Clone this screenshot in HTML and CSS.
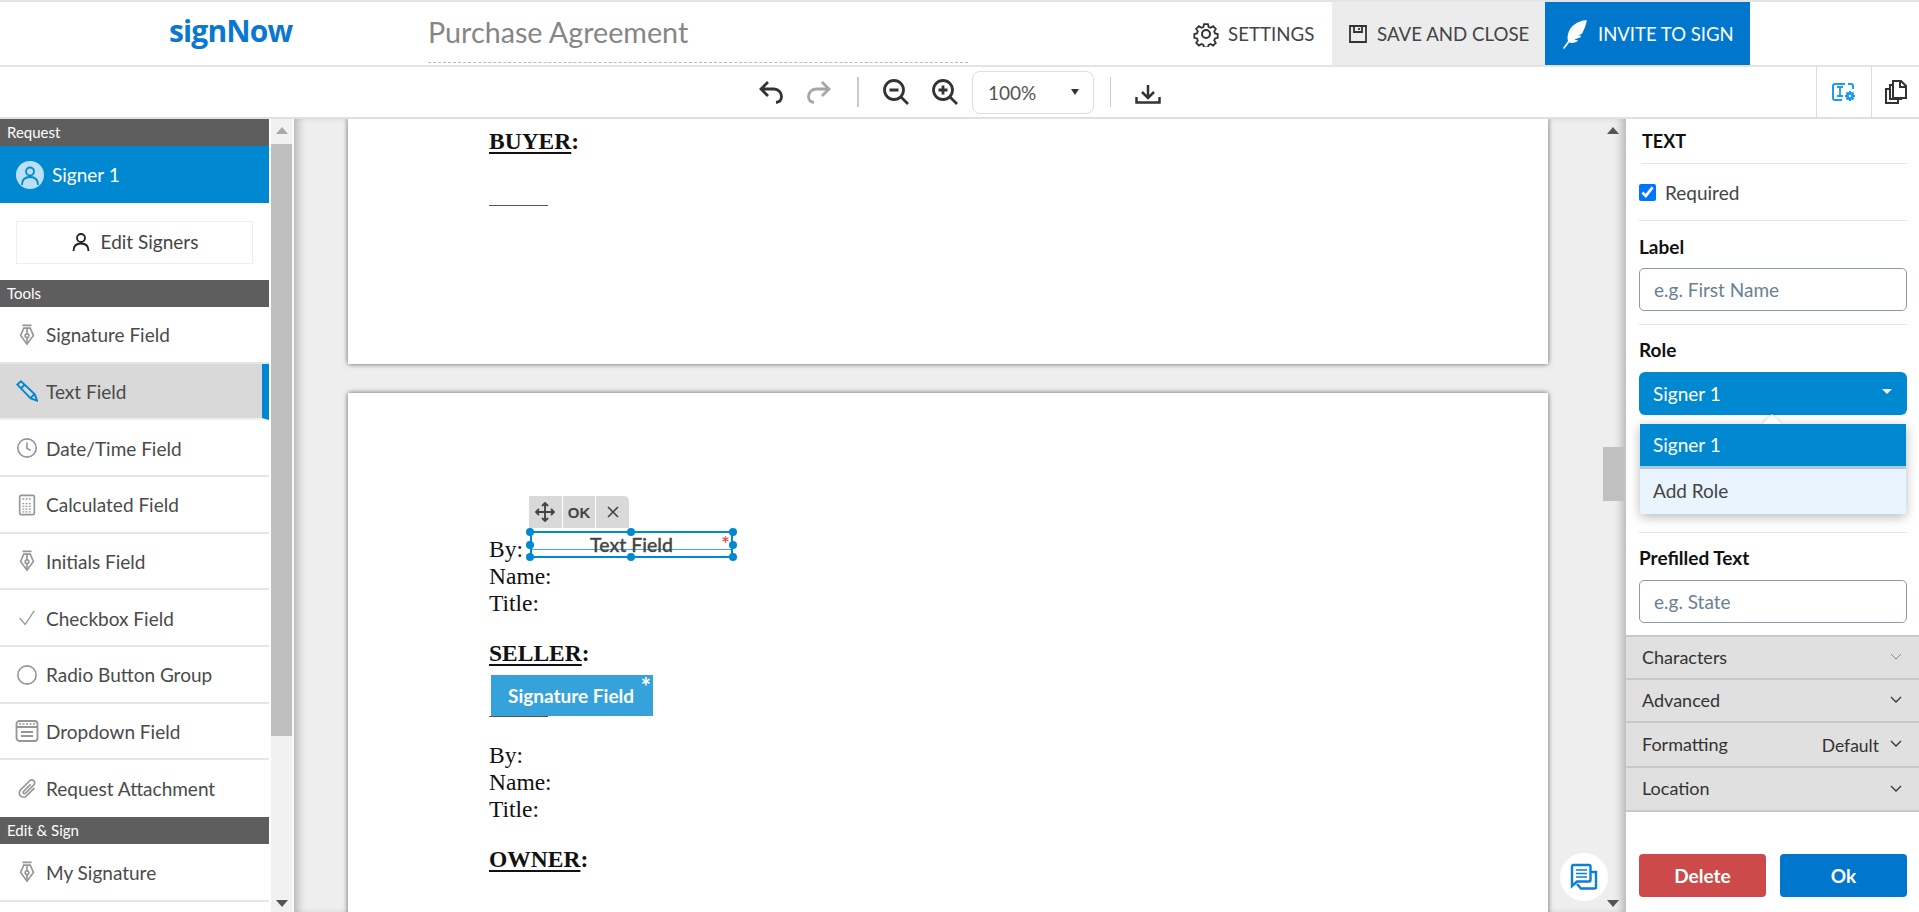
FILE: index.html
```html
<!DOCTYPE html>
<html lang="en">
<head>
<meta charset="utf-8">
<title>signNow - Purchase Agreement</title>
<link rel="stylesheet" href="styles.css">
</head>
<body>
<header class="header">
  <div class="logo">signNow</div>
  <div class="doc-title">Purchase Agreement</div>
  <div class="hbtn settings">
    <svg class="ic-gear" viewBox="0 0 26 26"><path d="M10.8 2h4.4l.7 3.2 2.2.9 2.8-1.8 3 3-1.8 2.8.9 2.2 3 .7v4.2l-3 .7-.9 2.2 1.8 2.8-3 3-2.8-1.8-2.2.9-.7 3h-4.4l-.7-3-2.2-.9-2.8 1.8-3-3 1.8-2.8-.9-2.2-3-.7v-4.2l3-.7.9-2.2-1.8-2.8 3-3 2.8 1.8 2.2-.9z" transform="translate(1.3 1.3) scale(.9)"/><circle cx="13" cy="13" r="4"/></svg>
    <span>SETTINGS</span>
  </div>
  <div class="hbtn save">
    <svg class="ic-save" viewBox="0 0 18 18"><path d="M1 1h16v16H1z"/><path d="M5 1v6h8V1M10 3v2"/></svg>
    <span>SAVE AND CLOSE</span>
  </div>
  <div class="hbtn invite">
    <svg class="ic-feather" viewBox="0 0 26 30"><path d="M25 1C15 2 8 7 6 15c-.6 3-.6 5 0 7l-5 7 1.200 1 5-6.500c3 1 7 0 9-2l-4-1 6-2 1-2-3 0 4-2c2-4 4-9 4.800-14z"/></svg>
    <span>INVITE TO SIGN</span>
  </div>
</header>

<div class="toolbar">
  <svg class="tb-undo" viewBox="0 0 26 24"><path d="M10 2 3 9l7 7M3 9h13a7.500 7.500 0 0 1 7.500 7.500c0 3-2 5.500-5.500 6"/></svg>
  <svg class="tb-redo" viewBox="0 0 26 24"><path d="M16 2l7 7-7 7M23 9H10a7.500 7.500 0 0 0-7.500 7.500c0 3 2 5.500 5.500 6"/></svg>
  <span class="tb-sep"></span>
  <svg class="tb-zoom first" viewBox="0 0 26 26"><circle cx="11" cy="11" r="9.500"/><path d="M18 18l7 7M6.500 11h9"/></svg>
  <svg class="tb-zoom" viewBox="0 0 26 26"><circle cx="11" cy="11" r="9.500"/><path d="M18 18l7 7M6.500 11h9M11 6.500v9"/></svg>
  <div class="zoom-select"><span>100%</span><i class="tri"></i></div>
  <span class="tb-sep second"></span>
  <svg class="tb-down" viewBox="0 0 26 20"><path d="M13 1v12M7 8l6 6 6-6M1.500 13v5.500h23V13"/></svg>
  <div class="tb-right">
    <div class="tb-tab">
      <svg class="ic-fieldset" viewBox="0 0 24 20"><path d="M13 2H3a2 2 0 0 0-2 2v12a2 2 0 0 0 2 2h7"/><path d="M16 2h3a2 2 0 0 1 2 2v3"/><path class="thin" d="M5 5h6M8 5v9M5 14h6"/><circle class="gear-hub" cx="18" cy="14" r="2.600"/><path d="M18 9v2M18 17v2M13 14h2M21 14h2M14.500 10.500l1.200 1.200M20.300 16.300l1.200 1.200M21.500 10.500l-1.200 1.200M15.700 16.300l-1.200 1.200"/></svg>
    </div>
    <div class="tb-tab">
      <svg class="ic-pages" viewBox="0 0 22 24"><path d="M8 1h8l5 5v12H8z"/><path d="M15 1v6h6"/><path d="M8 5H5v14h11v-1"/><path d="M5 9H1v14h12v-4"/></svg>
    </div>
  </div>
</div>

<main class="main">
  <aside class="sidebar">
    <div class="sec">Request</div>
    <div class="signer">
      <svg class="avatar" viewBox="0 0 28 28"><circle class="av-bg" cx="14" cy="14" r="14"/><circle class="av-l" cx="14" cy="10.500" r="4"/><path class="av-l" d="M6 24c0-6 3-8 8-8s8 2 8 8"/></svg>
      <span>Signer 1</span>
    </div>
    <div class="edit-wrap">
      <div class="edit-signers">
        <svg class="ic-person" viewBox="0 0 20 20"><circle cx="10" cy="6" r="4"/><path d="M2.500 19c0-5 3-7.500 7.500-7.500s7.500 2.500 7.500 7.500"/></svg>
        <span>Edit Signers</span>
      </div>
    </div>
    <div class="sec tools">Tools</div>
    <div class="row"><svg class="ri" viewBox="0 0 24 24"><path d="M7 1.500h10M8.500 4.500h7l3.500 8-7 9.500-7-9.500z"/><path d="M12 4.500v6M12 15v7"/><circle cx="12" cy="12.800" r="2"/></svg><span>Signature Field</span></div>
    <div class="row active"><svg class="ri blue" viewBox="0 0 24 24"><path d="M1.500 5l4-3.500 15 14 2.500 7-7-2.500zM5.500 9l4-4M16 19.500l4-4"/></svg><span>Text Field</span></div>
    <div class="row"><svg class="ri" viewBox="0 0 24 24"><circle cx="12" cy="12" r="10"/><path d="M12 6v6.500l4 2"/></svg><span>Date/Time Field</span></div>
    <div class="row"><svg class="ri" viewBox="0 0 24 24"><rect x="4" y="1.500" width="16" height="21" rx="1.500"/><path class="dots" d="M7 5.500h10M7 10.500h10M7 13.500h10M7 16.500h10M7 19.500h10"/></svg><span>Calculated Field</span></div>
    <div class="row"><svg class="ri" viewBox="0 0 24 24"><path d="M7 1.500h10M8.500 4.500h7l3.500 8-7 9.500-7-9.500z"/><path d="M12 4.500v6M12 15v7"/><circle cx="12" cy="12.800" r="2"/></svg><span>Initials Field</span></div>
    <div class="row"><svg class="ri thin-ic" viewBox="0 0 24 24"><path d="M4 12l6 7L20 4"/></svg><span>Checkbox Field</span></div>
    <div class="row"><svg class="ri" viewBox="0 0 24 24"><circle cx="12" cy="12" r="10"/></svg><span>Radio Button Group</span></div>
    <div class="row"><svg class="ri wide" viewBox="0 0 24 24"><rect x="1.500" y="2" width="21" height="20" rx="3"/><path d="M2 8h20M6 13h12M6 17h12"/><path class="dots" d="M4 5h16"/></svg><span>Dropdown Field</span></div>
    <div class="row last"><svg class="ri" viewBox="0 0 24 24"><path d="M20 11l-8.500 8.500a4.500 4.500 0 0 1-6.500-6.500L15 3a3 3 0 0 1 4.500 4.500L10 17a1.500 1.500 0 0 1-2-2l8-8"/></svg><span>Request Attachment</span></div>
    <div class="sec">Edit &amp; Sign</div>
    <div class="row mine"><svg class="ri" viewBox="0 0 24 24"><path d="M7 1.500h10M8.500 4.500h7l3.500 8-7 9.500-7-9.500z"/><path d="M12 4.500v6M12 15v7"/><circle cx="12" cy="12.800" r="2"/></svg><span>My Signature</span></div>
  </aside>

  <div class="sbar left-sbar">
    <i class="sb-up"></i>
    <div class="sb-thumb"></div>
    <i class="sb-down"></i>
  </div>

  <section class="docview">
    <div class="pages">
      <article class="page first-page">
        <p class="h"><u>BUYER</u>:</p>
        <div class="rule buyer-rule"></div>
      </article>
      <article class="page second-page">
        <p>By:</p>
        <p>Name:</p>
        <p>Title:</p>
        <p class="h seller"><u>SELLER</u>:</p>
        <div class="sig-field">Signature Field<sup>*</sup></div>
        <div class="rule"></div>
        <p class="by2">By:</p>
        <p>Name:</p>
        <p>Title:</p>
        <p class="h owner"><u>OWNER</u>:</p>

        <div class="text-field">
          <div class="tf-tools">
            <div class="tf-btn"><svg class="ic-move" viewBox="0 0 20 20"><path d="M10 1v18M1 10h18M7 4l3-3 3 3M7 16l3 3 3-3M4 7l-3 3 3 3M16 7l3 3-3 3"/></svg></div>
            <div class="tf-btn ok">OK</div>
            <div class="tf-btn"><svg class="ic-x" viewBox="0 0 12 12"><path d="M1 1l10 10M11 1 1 11"/></svg></div>
          </div>
          <div class="tf-box">
            <span class="tf-mid"></span>
            <span class="tf-label">Text Field</span>
            <span class="tf-star">*</span>
            <i class="h1"></i><i class="h2"></i><i class="h3"></i><i class="h4"></i><i class="h5"></i><i class="h6"></i><i class="h7"></i><i class="h8"></i>
          </div>
        </div>
      </article>
    </div>
    <div class="sbar right-sbar">
      <i class="sb-up"></i>
      <div class="sb-thumb"></div>
      <i class="sb-down"></i>
    </div>
    <div class="chat">
      <svg viewBox="0 0 28 28"><path class="c1" d="M8 9h18v15a1.500 1.500 0 0 1-1.500 1.500H11L7 21"/><path class="c2" d="M3 2h16a1.500 1.500 0 0 1 1.500 1.500V17a1.500 1.500 0 0 1-1.500 1.500H7L2 23V3z"/><path class="c3" d="M6 7h11M6 10.500h11M6 14h11"/></svg>
    </div>
  </section>

  <aside class="panel">
    <div class="p-title"><span>TEXT</span></div>
    <label class="p-check"><input type="checkbox" checked><span>Required</span></label>
    <div class="p-group g-label">
      <div class="p-label">Label</div>
      <input class="p-input" type="text" placeholder="e.g. First Name">
    </div>
    <div class="p-group g-role">
      <div class="p-label">Role</div>
      <div class="p-select"><span>Signer 1</span><i class="tri-w"></i></div>
      <div class="p-menu">
        <i class="caret"></i>
        <div class="m-on">Signer 1</div>
        <div class="m-add">Add Role</div>
      </div>
    </div>
    <div class="p-group g-pre">
      <div class="p-label">Prefilled Text</div>
      <input class="p-input" type="text" placeholder="e.g. State">
    </div>
    <div class="acc"><span>Characters</span><svg class="chev light" viewBox="0 0 12 7"><path d="M1 1l5 5 5-5"/></svg></div>
    <div class="acc"><span>Advanced</span><svg class="chev" viewBox="0 0 12 7"><path d="M1 1l5 5 5-5"/></svg></div>
    <div class="acc tall"><span>Formatting</span><em>Default</em><svg class="chev" viewBox="0 0 12 7"><path d="M1 1l5 5 5-5"/></svg></div>
    <div class="acc tall end"><span>Location</span><svg class="chev" viewBox="0 0 12 7"><path d="M1 1l5 5 5-5"/></svg></div>
    <div class="p-actions">
      <button class="btn del">Delete</button>
      <button class="btn ok-btn">Ok</button>
    </div>
  </aside>
</main>
</body>
</html>
```
FILE: styles.css
```css
* { box-sizing: border-box; }
html, body { margin: 0; height: 912px; overflow: hidden; background: #fff; }
body { font: 19px Lato, sans-serif; color: #444; }
svg { display: block; flex: none; fill: none; }

/* Header */
.header { display: flex; height: 67px; border-top: 2px solid #e4e4e4; border-bottom: 2px solid #e4e4e4; }
.logo { width: 259px; margin-left: 169px; font: 700 30px/58px "Open Sans", sans-serif; letter-spacing: -.85px; color: #0a78d0; }
.doc-title { width: 540px; height: 61px; border-bottom: 1px dashed #bbb; font-size: 28.700px; line-height: 60px; color: #868686; }
.hbtn { display: flex; align-items: center; height: 63px; font-size: 18.700px; }
.settings { width: 139px; margin-left: 225px; gap: 9px; color: #444; }
.save { width: 213px; background: #ececec; padding-left: 17px; gap: 10px; color: #444; }
.invite { width: 205px; background: #0077cc; color: #fff; padding-left: 17px; gap: 10px; font-size: 18.500px; }
.ic-gear { width: 26px; height: 26px; stroke: #333; stroke-width: 2; }
.ic-save { width: 18px; height: 18px; stroke: #333; stroke-width: 1.800; }
.ic-feather { width: 26px; height: 30px; fill: #fff; }

/* Toolbar */
.toolbar { display: flex; align-items: center; height: 52px; border-bottom: 2px solid #e0e0e0; padding-left: 758px; }
.toolbar svg { stroke-width: 2.800; }
.tb-undo, .tb-redo { width: 26px; height: 24px; stroke: #333; }
.toolbar .tb-redo { stroke: #a6a6a6; margin-left: 22px; }
.tb-sep { width: 2px; height: 30px; background: #ccc; margin-left: 25px; }
.tb-zoom { width: 26px; height: 26px; stroke: #333; margin-left: 23px; }
.tb-zoom.first { margin-left: 24px; }
.zoom-select { display: flex; align-items: center; justify-content: space-between; width: 122px; height: 43px; margin-left: 14px; padding: 0 14px 0 15px; border: 1px solid #ddd; border-radius: 8px; font: 19px Lato, sans-serif; color: #555; }
.tri { width: 0; height: 0; border: 4px solid transparent; border-top: 6px solid #333; border-bottom: 0; }
.tb-sep.second { margin-left: 16px; width: 1px; }
.toolbar .tb-down { width: 26px; height: 20px; stroke: #333; stroke-width: 2.500; margin-left: 24px; margin-top: 3px; }
.tb-right { display: flex; margin-left: auto; height: 50px; }
.tb-tab { display: flex; align-items: center; justify-content: center; width: 55px; border-left: 1px solid #ddd; }
.tb-tab:last-child { width: 48px; }
.toolbar .ic-fieldset { width: 24px; height: 20px; stroke: #1c9bf0; stroke-width: 2; }
.toolbar .ic-fieldset .thin { stroke-width: 1.800; }
.toolbar .ic-fieldset .gear-hub { stroke-width: 2.800; }
.toolbar .ic-pages { width: 22px; height: 24px; stroke: #333; stroke-width: 2; }

/* Main */
.main { display: flex; height: 793px; overflow: hidden; }

/* Sidebar */
.sidebar { width: 269px; flex: none; }
.sec { height: 27px; padding-left: 7px; background: #5e5e5e; color: #fff; font-size: 15px; line-height: 27px; }
.signer { display: flex; align-items: center; gap: 8px; height: 57px; padding-left: 16px; background: #0088d1; color: #fff; }
.avatar { width: 28px; height: 28px; }
.av-bg { fill: #b9e0f5; }
.av-l { stroke: #0088d1; stroke-width: 1.800; }
.edit-wrap { height: 77px; padding: 18px 16px 0; }
.edit-signers { display: flex; align-items: center; justify-content: center; gap: 10px; height: 43px; padding-bottom: 2px; border: 1px solid #eee; color: #444; }
.ic-person { width: 20px; height: 20px; stroke: #222; stroke-width: 1.800; }
.row { display: flex; align-items: center; height: 56.670px; padding: 1px 0 0 16px; gap: 8px; border-bottom: 2px solid #e6e6e6; color: #4a4a4a; }
.row.active { background: #d9d9d9; border-right: 7px solid #0088d1; border-bottom-color: #eee; }
.row.last { border-bottom: 0; padding-top: 0; }
.row.mine { height: 58px; }
.ri { width: 22px; height: 22px; stroke: #969696; stroke-width: 1.800; }
.ri.blue { stroke: #0088d1; stroke-width: 2.100; }
.ri.thin-ic { stroke-width: 1.300; }
.ri.wide { width: 24px; height: 24px; margin-left: -1px; margin-right: -1px; }
.dots { stroke-dasharray: 2 1.500; stroke-width: 1.500; }

/* Scrollbars */
.sbar { position: relative; display: flex; flex-direction: column; flex: none; width: 23px; margin-left: 2px; background: #f1f1f1; }
.left-sbar { border-right: 2px solid #f9f9f9; }
.left-sbar .sb-thumb { height: 592px; margin-top: 25px; background: #bfbfbf; }
.sb-up, .sb-down { position: absolute; left: 5px; width: 0; height: 0; border: 6px solid transparent; }
.sb-up { top: 8px; border-top: 0; border-bottom: 7px solid #aaa; }
.sb-down { bottom: 5px; border-bottom: 0; border-top: 7px solid #555; }

/* Document */
.docview { position: relative; display: flex; flex: 1; min-width: 0; padding-left: 54px; background: #eee; box-shadow: inset 9px 0 9px -5px #b5b5b5, inset -9px 0 9px -5px #b5b5b5; }
.pages { display: flex; flex-direction: column; gap: 29px; width: 1200px; flex: none; }
.page { position: relative; flex: none; background: #fff; padding-left: 141px; box-shadow: 0 0 5px rgba(0,0,0,.6); font: 23.500px/27px "Liberation Serif", serif; color: #111; }
.page p { margin: 0; }
.page .h { font-weight: 700; }
.page u { text-decoration-thickness: 2px; text-underline-offset: 3px; }
.first-page { height: 245px; padding-top: 9px; }
.second-page { height: 600px; padding-top: 143px; }
.rule { width: 59px; height: 1px; background: #555; }
.buyer-rule { margin-top: 50px; }
.page .seller { margin-top: 23px; }
.sig-field { position: relative; width: 162px; height: 41px; margin: 8px 0 0 2px; padding-left: 17px; background: #36a2db; color: #fff; font: 700 19px/41px Lato, sans-serif; }
.sig-field sup { position: absolute; right: 2px; top: 0; font-size: 24px; line-height: 24px; }
.page .by2 { margin-top: 25px; }
.page .owner { margin-top: 23px; }
.text-field { position: absolute; left: 182px; top: 103px; width: 203px; }
.tf-tools { display: flex; gap: 1px; width: 100px; height: 32px; margin: 0 0 3px -1px; }
.tf-btn { display: flex; align-items: center; justify-content: center; flex: 1; background: #d9d9d9; }
.tf-btn:last-child { border-top-right-radius: 5px; }
.tf-btn.ok { font: 700 15px "Liberation Sans", sans-serif; color: #444; }
.ic-move { width: 20px; height: 20px; stroke: #444; stroke-width: 1.900; }
.ic-x { width: 12px; height: 12px; stroke: #444; stroke-width: 1.600; }
.tf-box { position: relative; height: 27px; border: 2px solid #0088d1; }
.tf-mid { position: absolute; left: 0; right: 0; top: 16px; height: 1px; background: #44a8de; }
.tf-label { position: absolute; left: 0; right: 0; top: -2px; text-align: center; font: 500 19.500px/27px Lato, sans-serif; color: #444; -webkit-text-stroke: .3px #444; }
.tf-star { position: absolute; right: 1px; top: 1px; color: #d9453f; font: 22px/20px Lato, sans-serif; }
.tf-box i { position: absolute; width: 8px; height: 8px; border-radius: 50%; background: #0088d1; }
.h1 { left: -6px; top: -5px; }
.h2 { left: 95px; top: -5px; }
.h3 { right: -6px; top: -5px; }
.h4 { left: -6px; top: 8px; }
.h5 { right: -6px; top: 8px; }
.h6 { left: -6px; bottom: -5px; }
.h7 { left: 95px; bottom: -5px; }
.h8 { right: -6px; bottom: -5px; }
.right-sbar { width: 21px; margin-left: 55px; background: transparent; }
.right-sbar .sb-thumb { height: 54px; margin-top: 328px; background: #c0c0c0; }
.right-sbar .sb-up { left: 4px; border-bottom-color: #555; }
.right-sbar .sb-down { left: 4px; }
.chat { position: absolute; right: 18px; bottom: 11px; display: flex; align-items: center; justify-content: center; width: 48px; height: 48px; border-radius: 50%; background: #fff; }
.chat svg { width: 28px; height: 28px; }
.c1, .c2, .c3 { stroke: #0a7fd6; stroke-width: 2.400; }
.c2 { fill: #fff; }
.c3 { stroke-width: 1.300; }

/* Right panel */
.panel { width: 293px; flex: none; padding: 0 12px 0 13px; background: #fff; }
.p-title { height: 45px; padding: 10px 3px 0; }
.p-title span { display: block; font: 700 18px/24px Lato, sans-serif; color: #111; }
.p-title::after { content: ""; display: block; height: 1px; margin: 10px -3px 0 0; background: #e5e5e5; }
.p-check { display: flex; align-items: center; gap: 9px; height: 57px; border-bottom: 1px solid #e5e5e5; }
.p-check input { width: 17px; height: 17px; margin: 0; flex: none; }
.p-label { font: 700 19px/24px Lato, sans-serif; color: #111; }
.p-group { position: relative; border-bottom: 1px solid #e5e5e5; }
.g-label { height: 104px; padding-top: 14px; }
.g-role { height: 208px; padding-top: 13px; }
.g-pre { height: 102px; padding-top: 13px; border-bottom: 0; }
.p-input { display: block; width: 268px; height: 43px; margin-top: 9px; padding: 0 14px; border: 1px solid #8a9bab; border-radius: 5px; font: 19px Lato, sans-serif; background: #fff; }
.g-pre .p-input { margin-top: 10px; }
.p-input::placeholder { color: #6c8094; opacity: 1; }
.p-select { display: flex; align-items: center; justify-content: space-between; width: 268px; height: 43px; margin-top: 10px; padding: 0 14px; background: #0088d1; border-radius: 6px; color: #fff; }
.tri-w { width: 0; height: 0; margin-bottom: 4px; margin-right: 1px; border: 5px solid transparent; border-top: 5px solid #fff; border-bottom: 0; }
.p-menu { position: relative; width: 266px; margin: 9px 0 0 1px; border-radius: 0 0 4px 4px; box-shadow: 0 3px 12px rgba(0,0,0,.28); }
.caret { position: absolute; left: 125px; top: -7px; width: 14px; height: 14px; background: #fff; transform: rotate(45deg); box-shadow: -1px -1px 2px rgba(0,0,0,.15); }
.m-on { position: relative; height: 45px; padding: 0 13px; background: #0088d1; border-bottom: 3px solid #b0c8dc; color: #fff; line-height: 42px; }
.m-add { height: 45px; padding: 0 13px; background: #eaf4fe; line-height: 43px; color: #444; border-radius: 0 0 4px 4px; }
.acc { display: flex; align-items: center; height: 43px; margin: 0 -12px 0 -13px; padding: 0 16px 2px; background: #e0e0e0; border-top: 2px solid #c9c9c9; font-size: 18px; color: #333; }
.acc.tall { height: 45px; }
.acc.tall.end { height: 46px; border-bottom: 2px solid #c9c9c9; }
.acc em { margin-left: auto; font-style: normal; font-size: 17.500px; padding-top: 4px; }
.acc em + .chev { margin-left: 11px; }
.chev { width: 12px; height: 7px; margin-left: auto; margin-right: 1px; stroke: #333; stroke-width: 1.300; }
.chev.light { stroke: #888; stroke-width: 1; }
.p-actions { display: flex; gap: 14px; margin-top: 42px; }
.btn { width: 127px; height: 43px; padding: 0; border: 0; border-radius: 4px; color: #fff; font: 700 19px Lato, sans-serif; }
.del { background: #cc4a4a; }
.ok-btn { background: #0077cc; }
```
